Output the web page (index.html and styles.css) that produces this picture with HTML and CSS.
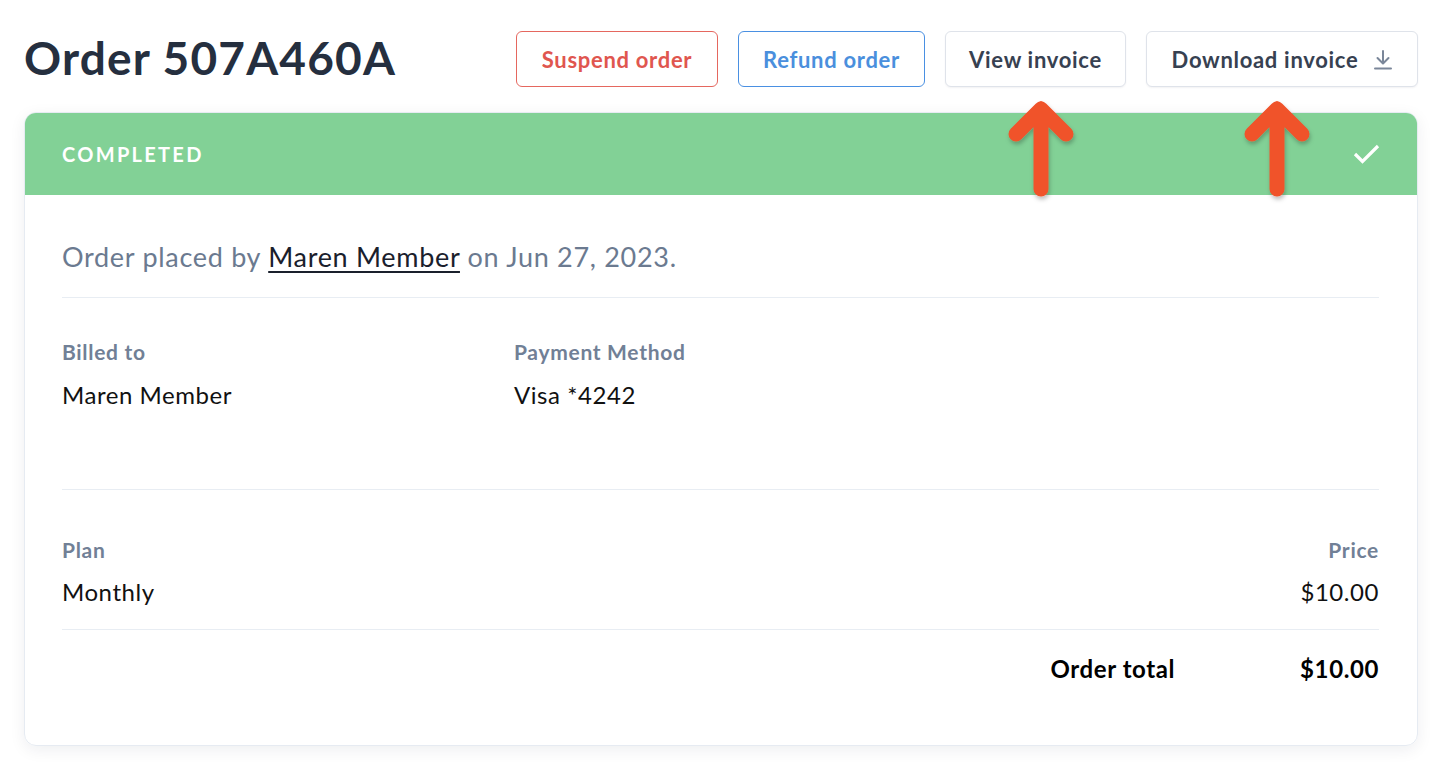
FILE: index.html
```html
<!DOCTYPE html>
<html>
<head>
<meta charset="utf-8">
<link rel="stylesheet" href="styles.css">
</head>
<body>
<div class="page">
  <header class="top">
    <h1 class="title">Order 507A460A</h1>
    <div class="actions">
      <button class="btn btn-red">Suspend order</button>
      <button class="btn btn-blue">Refund order</button>
      <button class="btn btn-plain btn-view">View invoice</button>
      <button class="btn btn-plain btn-download">Download invoice
        <svg class="dl" width="18" height="20" viewBox="0 0 18 20"><path d="M9 1v12M3.5 8l5.5 5.5L14.5 8" fill="none" stroke="#7a8699" stroke-width="2" stroke-linecap="round" stroke-linejoin="round"/><path d="M1 18.5h16" stroke="#7a8699" stroke-width="2" stroke-linecap="round"/></svg>
      </button>
    </div>
  </header>
  <section class="card">
    <div class="status">
      <span class="status-text">COMPLETED</span>
      <svg width="28" height="22" viewBox="0 0 28 22"><path d="M2 11l7.5 7.5L25 3" fill="none" stroke="#fff" stroke-width="3.2"/></svg>
    </div>
    <div class="body">
      <p class="placed">Order placed by <a class="member" href="#">Maren Member</a> on Jun 27, 2023.</p>
      <div class="rule"></div>
      <div class="info">
        <div class="col">
          <div class="label">Billed to</div>
          <div class="value">Maren Member</div>
        </div>
        <div class="col">
          <div class="label">Payment Method</div>
          <div class="value">Visa *4242</div>
        </div>
      </div>
      <div class="rule"></div>
      <div class="items">
        <div class="item-row">
          <div class="label">Plan</div>
          <div class="label">Price</div>
        </div>
        <div class="item-row values">
          <div class="value">Monthly</div>
          <div class="value">$10.00</div>
        </div>
      </div>
      <div class="rule"></div>
      <div class="total">
        <span class="total-label">Order total</span>
        <span class="total-amount">$10.00</span>
      </div>
    </div>
  </section>
  <svg class="arrows" width="1440" height="220" viewBox="0 0 1440 220">
    <defs>
      <filter id="sh" x="-50%" y="-50%" width="200%" height="200%">
        <feDropShadow dx="1" dy="3" stdDeviation="2" flood-color="#000" flood-opacity="0.25"/>
      </filter>
    </defs>
    <g fill="none" stroke="#f0522b" stroke-width="15" stroke-linecap="round" stroke-linejoin="round" filter="url(#sh)">
      <path d="M1041 189V109M1016 134l25-25 25 25"/>
      <path d="M1277 189V109M1252 134l25-25 25 25"/>
    </g>
  </svg>
</div>
</body>
</html>
```

FILE: styles.css
```css
* { box-sizing: border-box; }
html, body { margin: 0; padding: 0; background: #fff; }
body { font-family: "Lato", "Noto Sans", sans-serif; color: #111; }
.page { position: relative; width: 1440px; height: 768px; padding: 31px 22px 0 24px; overflow: hidden; }
.top { display: flex; justify-content: space-between; align-items: center; height: 56px; }
.title { margin: 0 0 3px; font-size: 46px; line-height: 56px; font-weight: 700; color: #252f3f; letter-spacing: 1.2px; }
.actions { display: flex; gap: 20px; }
.btn { height: 56px; padding: 0; border-radius: 6px; background: #fff; font-family: inherit; font-size: 22px; letter-spacing: 0.7px; font-weight: 700; display: flex; align-items: center; justify-content: center; gap: 16px; white-space: nowrap; cursor: pointer; }
.btn-red { border: 1.5px solid #e5675f; color: #e0564f; width: 202px; }
.btn-blue { border: 1.5px solid #4a90e2; color: #4a8fdd; width: 187px; }
.btn-plain { border: 1.5px solid #dfe3ea; color: #374151; box-shadow: 0 1px 2px rgba(30,40,60,0.06); }
.btn-view { width: 181px; }
.btn-download { width: 272px; }
.dl { margin-top: 2px; }
.card { margin-top: 25px; border: 1px solid #e6ebf2; border-radius: 12px; overflow: hidden; box-shadow: 0 4px 16px rgba(20,30,50,0.07); height: 634px; }
.status { height: 82px; background: #82d196; display: flex; align-items: center; justify-content: space-between; padding: 0 36px 0 37px; }
.status-text { color: #fff; font-weight: 700; font-size: 20px; letter-spacing: 2.3px; }
.body { padding: 0 38px 0 37px; }
.placed { margin: 44px 0 22px; font-size: 27px; line-height: 36px; letter-spacing: 0.7px; color: #6b7a90; }
.member { color: #1a202c; text-decoration: underline; text-underline-offset: 4px; text-decoration-thickness: 1.5px; }
.rule { height: 1px; background: #e8edf3; }
.info { display: flex; padding: 40px 0 79px; }
.col { width: 452px; }
.label { font-size: 21px; line-height: 28px; font-weight: 700; letter-spacing: 0.7px; color: #718096; }
.value { font-size: 24px; line-height: 30px; letter-spacing: 0.55px; color: #111; margin-top: 14px; }
.items { padding: 46px 0 22px; }
.items .value { margin-top: 13px; }
.items .item-row .value:last-child, .items .item-row .label:last-child { margin-right: 0; }
.item-row { display: flex; justify-content: space-between; }
.total { display: flex; justify-content: flex-end; align-items: center; padding-top: 24px; font-size: 24px; line-height: 30px; letter-spacing: 0.6px; font-weight: 700; color: #000; }
.total-amount { margin-left: 125px; }
.arrows { position: absolute; left: 0; top: 0; pointer-events: none; }
```
